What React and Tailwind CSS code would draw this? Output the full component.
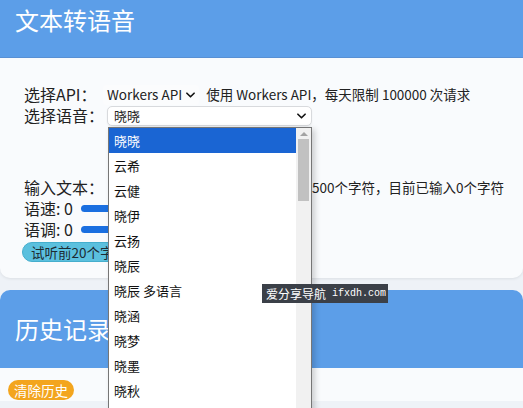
const voices = ['晓晓','云希','云健','晓伊','云扬','晓辰','晓辰 多语言','晓涵','晓梦','晓墨','晓秋'];

const Chevron = ({ className }) => (
  <svg viewBox="0 0 10 6" className={className} fill="none" stroke="currentColor" strokeWidth="1.8" strokeLinecap="round" strokeLinejoin="round">
    <path d="M1 1l4 4 4-4" />
  </svg>
);

const App = () => {
  return (
    <div className="relative w-[523px] h-[408px] overflow-hidden bg-[#eef2f7] text-[#222] font-['Noto_Sans_CJK_SC','Noto_Sans',sans-serif]">
      {/* 文本转语音 */}
      <section className="bg-[#f9fbfd] rounded-b-[10px] shadow-[0_1px_3px_rgba(0,0,0,0.08)]">
        <div className="h-[58px] bg-[#5c9ee8] border-b border-[#5890d4] px-[15px] pt-[6px] text-white text-[24px] leading-[28px]">
          文本转语音
        </div>
        <div className="px-[24px] pt-[26px] pb-[16px] text-[16px] leading-[21px]">
          <div className="flex items-center h-[21px] whitespace-nowrap">
            <span className="w-[79px] shrink-0">选择API：</span>
            <div className="flex items-center gap-[4px] px-[4px] h-[20px] rounded-[4px] bg-[#fbfcfd] text-[13.5px]">
              Workers API
              <Chevron className="w-[9px] h-[6px] text-[#111]" />
            </div>
            <span className="ml-[7px] text-[13.5px]">使用 Workers API，每天限制 100000 次请求</span>
          </div>
          <div className="flex items-center h-[21px]">
            <span className="w-[83px] shrink-0">选择语音：</span>
            <div className="flex items-center justify-between w-[205px] h-[20px] pl-[6px] pr-[5px] rounded-[5px] border border-[#d8dadd] bg-white text-[13px] shadow-[0_1px_2px_rgba(0,0,0,0.06)]">
              晓晓
              <Chevron className="w-[9px] h-[6px] text-[#111]" />
            </div>
          </div>

          <div className="flex items-center h-[21px] mt-[51px] whitespace-nowrap">
            <span className="w-[261px] shrink-0">输入文本：</span>
            <span className="text-[13.5px]">限制500个字符，目前已输入0个字符</span>
          </div>
          <div className="flex items-center h-[21px]">
            <span className="w-[57px] shrink-0">语速: 0</span>
            <div className="w-[160px] h-[7px] rounded-full bg-[#1a6fe0]" />
          </div>
          <div className="flex items-center h-[21px]">
            <span className="w-[57px] shrink-0">语调: 0</span>
            <div className="w-[160px] h-[7px] rounded-full bg-[#1a6fe0]" />
          </div>
          <button className="mt-[2px] -ml-[2px] h-[20px] px-[8px] rounded-full bg-[#5bc0de] border border-[#45aecd] text-[13.5px] leading-[18px] text-[#1d2b33]">
            试听前20个字符
          </button>
        </div>
      </section>

      {/* 历史记录 */}
      <section className="mt-[12px] bg-[#f9fbfd] rounded-t-[10px]">
        <div className="h-[78px] flex items-center rounded-t-[10px] bg-[#5c9ee8] px-[15px] text-white text-[24px]">
          历史记录
        </div>
        <div className="px-[8px] pt-[9px]">
          <button className="h-[20px] px-[6px] rounded-full bg-[#f3a51e] text-white text-[13.5px] leading-[20px]">
            清除历史
          </button>
        </div>
      </section>

      {/* open voice list */}
      <div className="absolute left-[108px] top-[127px] w-[204px] h-[300px] flex bg-white border border-[#767676] shadow-[3px_2px_6px_rgba(0,0,0,0.18)] text-[13px]">
        <ul className="flex-1">
          {voices.map((v, i) => (
            <li key={v} className={`h-[25px] flex items-center pl-[5px] ${i === 0 ? 'bg-[#1a65d3] text-white' : 'text-[#111]'}`}>
              {v}
            </li>
          ))}
        </ul>
        <div className="w-[15px] bg-[#f1f1f1] flex flex-col items-center">
          <div className="h-[11px] flex items-center justify-center">
            <div className="w-0 h-0 border-l-[4px] border-r-[4px] border-b-[4px] border-l-transparent border-r-transparent border-b-[#a3a3a3]" />
          </div>
          <div className="w-[11px] h-[62px] bg-[#c1c1c1]" />
        </div>
      </div>

      {/* watermark */}
      <div className="absolute left-[262px] top-[284px] h-[19px] w-[126px] px-[4px] flex items-center gap-[6px] bg-[#3b4048] text-white text-[12px] whitespace-nowrap">
        <span>爱分享导航</span>
        <span className="font-['Liberation_Mono',monospace] text-[10px]">ifxdh.com</span>
      </div>
    </div>
  );
};

export default App;
